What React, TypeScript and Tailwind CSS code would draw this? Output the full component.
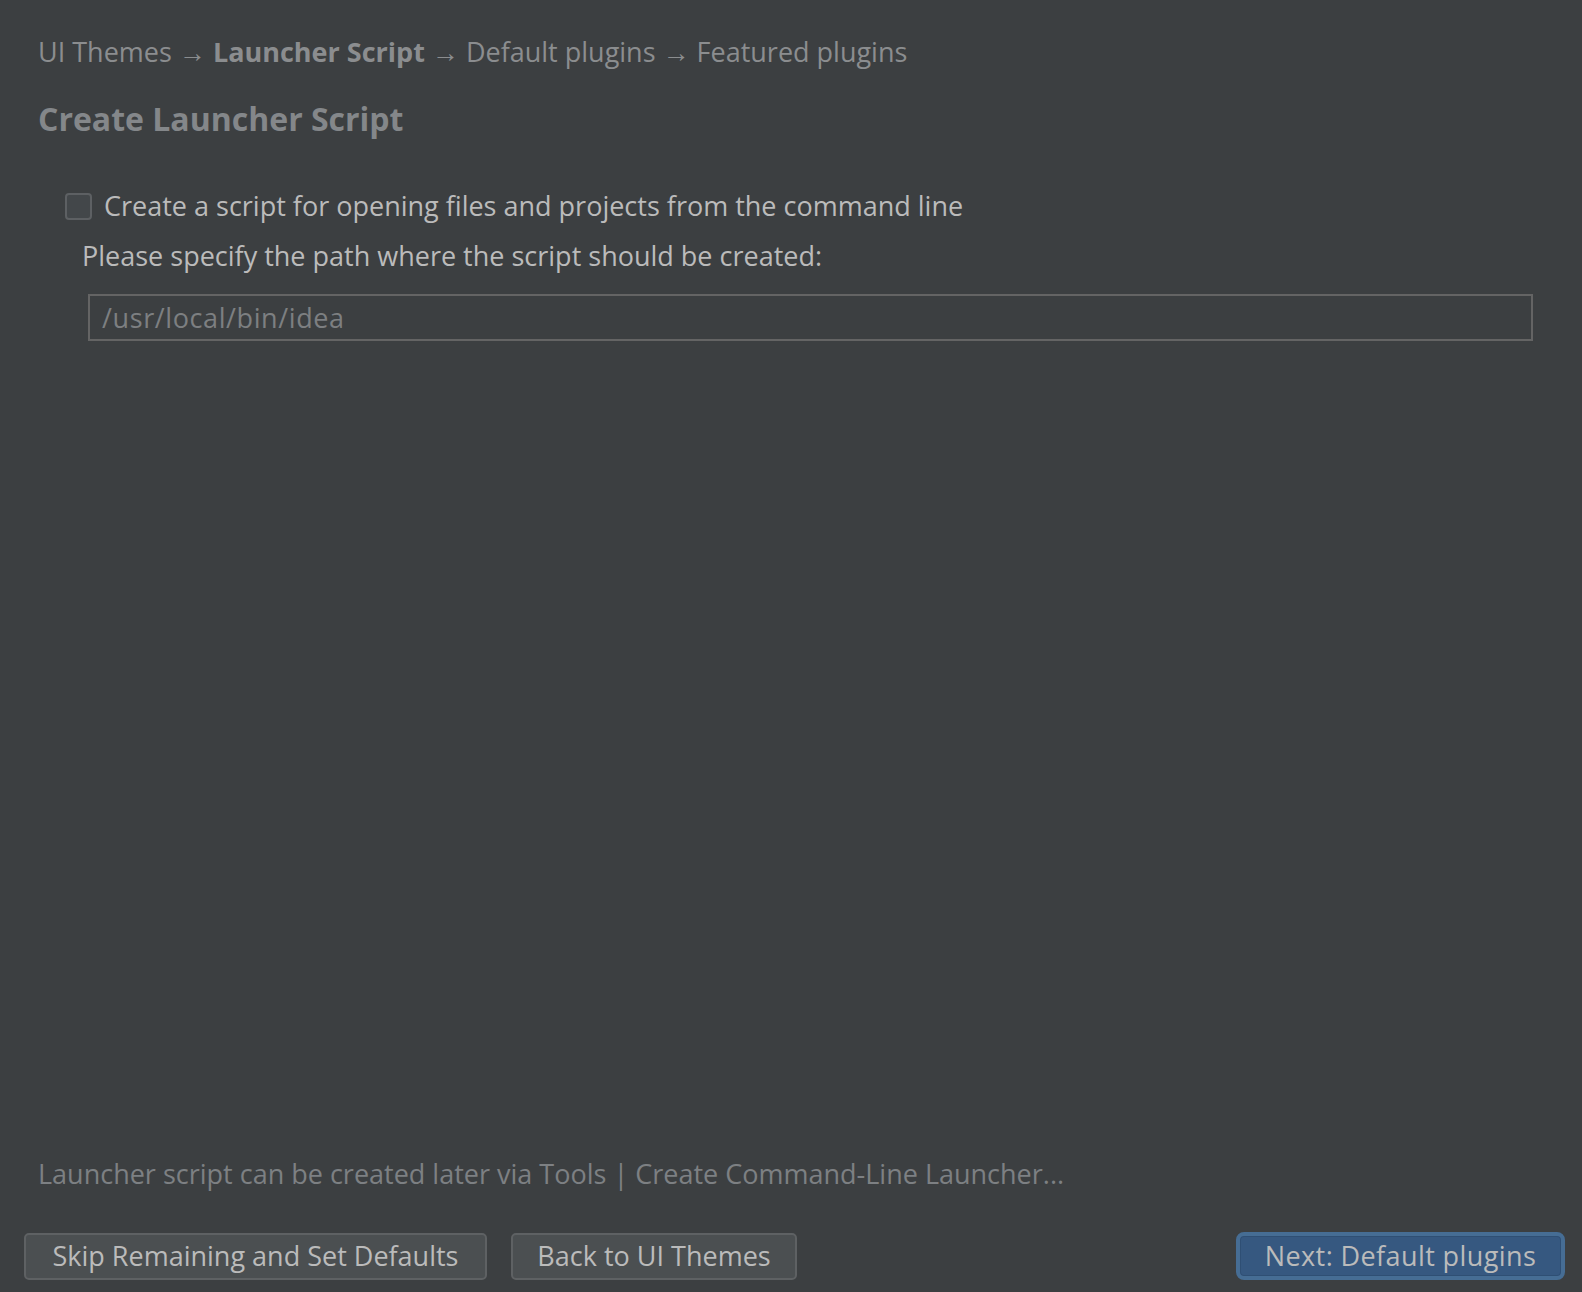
import React from "react";

export default function App() {
  const font = { fontFamily: '"Open Sans", "Liberation Sans", Arial, sans-serif' };
  return (
    <div className="w-[1582px] h-[1292px] bg-[#3c3f41] flex flex-col overflow-hidden" style={font}>
      <div className="pl-[38px] pt-[36px] text-[27px] leading-[32px] text-[#8b8d8f] whitespace-nowrap">
        <span>UI Themes → </span>
        <span className="font-bold">Launcher Script</span>
        <span> → Default plugins → Featured plugins</span>
      </div>
      <div className="pl-[38px] mt-[32px] text-[32px] leading-[38px] font-bold text-[#84878a]">
        Create Launcher Script
      </div>
      <div className="pl-[65px] mt-[52px] flex items-center gap-[12px]">
        <div className="w-[27px] h-[27px] rounded-[4px] border-2 border-[#5d6063] bg-[#43474a]" />
        <span className="text-[27px] leading-[32px] text-[#bbbbbb]">
          Create a script for opening files and projects from the command line
        </span>
      </div>
      <div className="pl-[82px] mt-[18px] text-[27px] leading-[32px] text-[#bbbbbb]">
        Please specify the path where the script should be created:
      </div>
      <div className="ml-[88px] mr-[49px] mt-[22px] h-[47px] border-2 border-[#646464] flex items-center pl-[12px]">
        <span className="text-[27px] leading-[32px] tracking-[0.6px] text-[#7d7f81]">/usr/local/bin/idea</span>
      </div>
      <div className="flex-1" />
      <div className="pl-[38px] text-[27px] leading-[32px] text-[#7d8083]">
        Launcher script can be created later via Tools | Create Command-Line Launcher...
      </div>
      <div className="mt-[42px] mb-[12px] flex items-center pl-[24px] pr-[17px]">
        <button className="h-[47px] w-[463px] rounded-[5px] border-2 border-[#5e6163] bg-[#4b4f51] text-[27px] text-[#bbbbbb]">
          Skip Remaining and Set Defaults
        </button>
        <button className="ml-[24px] h-[47px] w-[286px] rounded-[5px] border-2 border-[#5e6163] bg-[#4b4f51] text-[27px] text-[#bbbbbb]">
          Back to UI Themes
        </button>
        <div className="flex-1" />
        <button className="h-[48px] w-[329px] rounded-[8px] border-[4px] border-[#466d94] bg-[#365880] text-[27px] tracking-[0.4px] text-[#bbbbbb] shadow-[inset_0_0_0_1px_#2f4f74]">
          Next: Default plugins
        </button>
      </div>
    </div>
  );
}
